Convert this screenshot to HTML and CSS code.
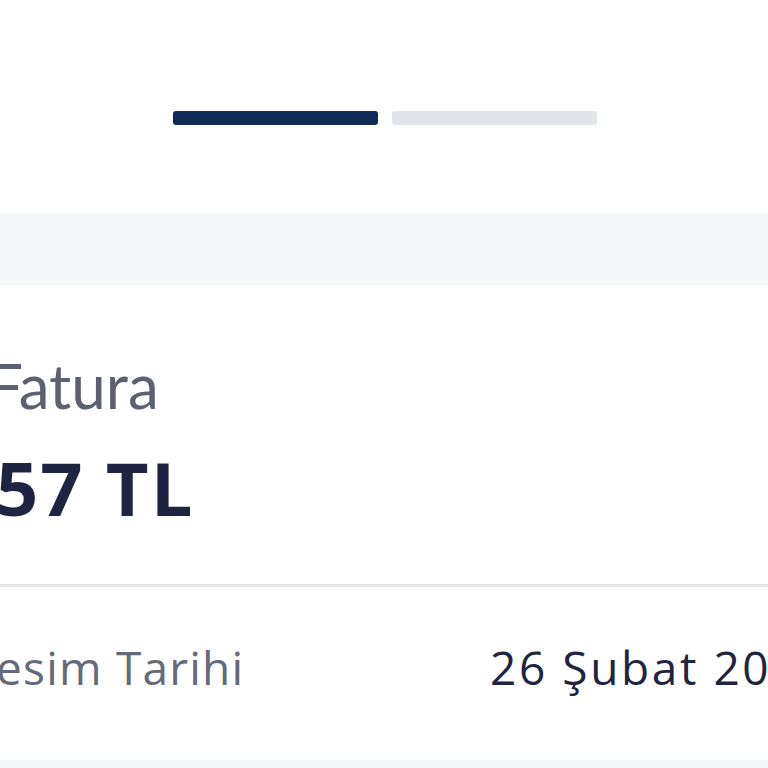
FILE: index.html
```html
<!DOCTYPE html>
<html lang="tr">
<head>
<meta charset="utf-8">
<title>Fatura</title>
<link rel="stylesheet" href="styles.css">
</head>
<body>
<div class="page">
  <header class="steps">
    <div class="step step-active"></div>
    <div class="step"></div>
  </header>
  <div class="band"></div>
  <section class="summary">
    <div class="label">Fatura</div>
    <div class="amount">57 TL</div>
  </section>
  <div class="divider"></div>
  <section class="row">
    <div class="row-label">esim Tarihi</div>
    <div class="row-value">26 Şubat 20</div>
  </section>
  <div class="band band-bottom"></div>
</div>
</body>
</html>
```
FILE: styles.css
```css
html, body {
  margin: 0;
  padding: 0;
  background: #ffffff;
}
.page {
  width: 768px;
  height: 768px;
  overflow: hidden;
  font-family: "Open Sans", "Noto Sans", sans-serif;
  display: flex;
  flex-direction: column;
}
.steps {
  height: 213px;
  box-sizing: border-box;
  padding-top: 111px;
  padding-left: 2px;
  display: flex;
  justify-content: center;
  align-items: flex-start;
  gap: 14px;
  flex-shrink: 0;
}
.step {
  width: 205px;
  height: 14px;
  border-radius: 3px;
  background: #e1e4ea;
}
.step-active {
  background: #0f2a55;
}
.band {
  height: 72px;
  background: #f6f7f9;
  flex-shrink: 0;
}
.summary {
  height: 299px;
  box-sizing: border-box;
  padding-top: 50px;
  flex-shrink: 0;
}
.label {
  font-family: "Lato", "Open Sans", sans-serif;
  font-size: 62px;
  line-height: 100px;
  color: #5b616e;
  text-indent: -12px;
  white-space: nowrap;
}
.amount {
  margin-top: 3px;
  font-size: 74px;
  font-weight: 700;
  line-height: 100px;
  letter-spacing: 2px;
  color: #1f2541;
  text-indent: -4px;
  white-space: nowrap;
}
.divider {
  height: 3px;
  background: #e3e5e9;
  flex-shrink: 0;
}
.row {
  height: 159px;
  padding-bottom: 14px;
  display: flex;
  justify-content: space-between;
  align-items: center;
  flex-shrink: 0;
  white-space: nowrap;
}
.row-label {
  font-size: 46px;
  color: #656a78;
  letter-spacing: 1.2px;
  margin-left: -4px;
}
.row-value {
  font-size: 46px;
  color: #1f2541;
  letter-spacing: 2.6px;
  width: 278px;
}
.band-bottom {
  height: 20px;
}
```
